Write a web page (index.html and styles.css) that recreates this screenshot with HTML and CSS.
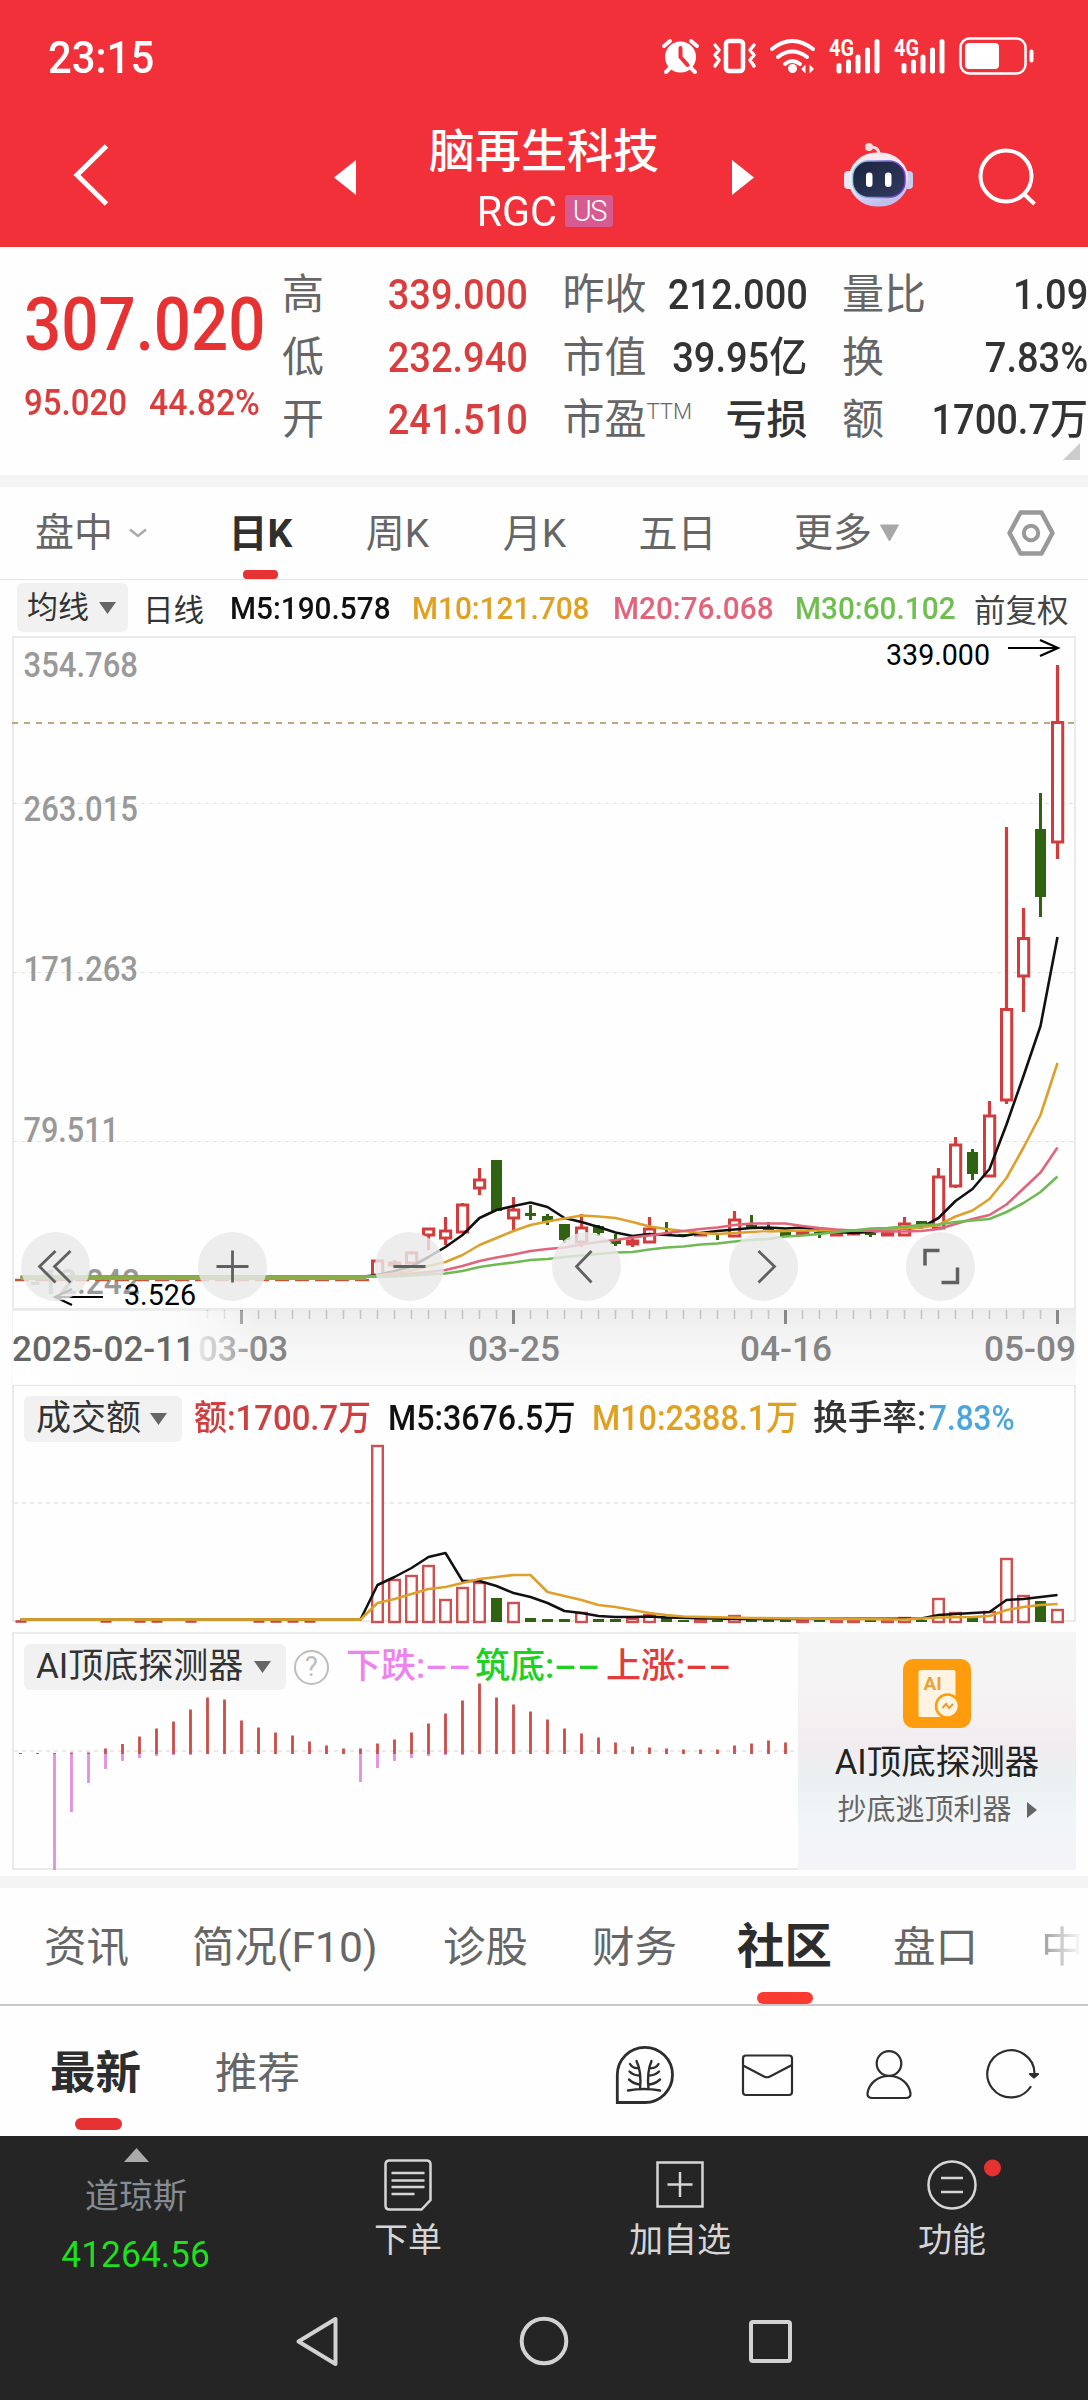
FILE: index.html
```html
<!DOCTYPE html>
<html lang="zh-CN">
<head>
<meta charset="utf-8">
<title>脑再生科技 RGC</title>
<link rel="stylesheet" href="styles.css">
</head>
<body>
<header class="top">
  <div class="status">
    <span class="clock">23:15</span>
    <svg class="status-icons" width="380" height="44" viewBox="660 34 380 44" fill="none" stroke="#fff">
      <circle cx="680.5" cy="57" r="15.5" fill="#fff" stroke="none"/>
      <path d="M664 46l6-5M697 46l-6-5M670 68l-4 4M691 68l4 4" stroke-width="4" stroke-linecap="round"/>
      <path d="M680.5 48v9l7 8" stroke="#f13039" stroke-width="4" stroke-linecap="round"/>
      <rect x="726" y="41" width="17" height="30" rx="3" stroke-width="4.5"/>
      <path d="M715 45l4 5-4 5 4 5-4 6M754 45l-4 5 4 5-4 5 4 6" stroke-width="3.5" stroke-linecap="round" stroke-linejoin="round"/>
      <path d="M772 49Q792 33 813 49M778 57Q792 46 807 57M785 64Q792 58 800 64" stroke-width="4" stroke-linecap="round"/>
      <circle cx="792.500" cy="68.500" r="4.500" fill="#fff" stroke="none"/>
      <path d="M801 69l4.500-4.500v9zM814 69l-4.500-4.500v9z" fill="#fff" stroke="none"/>
      <g stroke-width="5" stroke-linecap="round">
        <path id="sig" d="M839 65.500V71M848.500 62V71M858 57V71M867.500 50V71M877 41.500V71"/>
        <use href="#sig" x="65"/>
      </g>
      <g fill="#fff" stroke="none" class="net"><text x="829" y="56" textLength="25" lengthAdjust="spacingAndGlyphs">4G</text><text x="894" y="56" textLength="25" lengthAdjust="spacingAndGlyphs">4G</text></g>
      <rect x="960.500" y="38.500" width="65" height="35" rx="9" stroke-width="2.500"/>
      <rect x="965" y="43" width="34" height="26" rx="4" fill="#fff" stroke="none"/>
      <path d="M1031.500 51.500v9" stroke-width="4" stroke-linecap="round"/>
    </svg>
  </div>
  <nav class="titlebar">
    <svg class="back" width="36" height="66" viewBox="73 142 36 66" fill="none" stroke="#fff" stroke-width="5"><path d="M106.500 146L77 175l29.500 29"/></svg>
    <svg class="prev" width="22" height="35" viewBox="0 0 22 35"><path d="M22 0v35L0 17.500z" fill="#fff"/></svg>
    <div class="name"><h1>脑再生科技</h1><p><span class="code">RGC</span><span class="market">US</span></p></div>
    <svg class="next" width="22" height="35" viewBox="0 0 22 35"><path d="M0 0v35l22-17.500z" fill="#fff"/></svg>
    <svg class="robot" width="70" height="66" viewBox="844 142 70 66">
      <defs><linearGradient id="head" x1="0" y1="0" x2="0.300" y2="1"><stop offset="0" stop-color="#ffe9ea"/><stop offset=".6" stop-color="#f1e9f8"/><stop offset="1" stop-color="#bfc0ee"/></linearGradient>
      <linearGradient id="visor" x1="0" y1="0" x2="1" y2="1"><stop offset="0" stop-color="#1c2340"/><stop offset="1" stop-color="#313b5e"/></linearGradient>
      <linearGradient id="rim" x1="0" y1="0" x2="1" y2="0"><stop offset="0" stop-color="#8fd8ea"/><stop offset="1" stop-color="#7433d6"/></linearGradient></defs>
      <path d="M869 147q10-1 10 8" fill="none" stroke="#fbd9dc" stroke-width="3"/><circle cx="869" cy="147" r="4" fill="#fbd9dc"/>
      <rect x="844" y="171" width="9" height="18" rx="4" fill="#eee6f4"/><rect x="904" y="171" width="9" height="18" rx="4" fill="#c9cbf2"/>
      <rect x="848.500" y="152.500" width="60" height="54" rx="28" fill="url(#head)"/>
      <rect x="852.500" y="161" width="52.500" height="36.500" rx="16" fill="url(#visor)" stroke="url(#rim)" stroke-width="1.500"/>
      <rect x="866" y="172.500" width="6.500" height="14.500" rx="3.200" fill="#fff"/><rect x="885" y="172.500" width="6.500" height="14.500" rx="3.200" fill="#fff"/>
    </svg>
    <svg class="search" width="60" height="60" viewBox="977 147 60 60" fill="none" stroke="#fff" stroke-width="4"><circle cx="1006" cy="176" r="25.500"/><path d="M1024.500 194.500l10 9.500"/></svg>
  </nav>
</header>

<section class="quote">
  <div class="last"><div class="price">307.020</div><div class="change"><span>95.020</span><span>44.82%</span></div></div>
  <dl class="stats">
    <div><dt>高</dt><dd class="up">339.000</dd></div>
    <div><dt>昨收</dt><dd>212.000</dd></div>
    <div><dt>量比</dt><dd>1.09</dd></div>
    <div><dt>低</dt><dd class="up">232.940</dd></div>
    <div><dt>市值</dt><dd>39.95亿</dd></div>
    <div><dt>换</dt><dd>7.83%</dd></div>
    <div><dt>开</dt><dd class="up">241.510</dd></div>
    <div><dt>市盈<sup>TTM</sup></dt><dd class="cjk">亏损</dd></div>
    <div><dt>额</dt><dd>1700.7万</dd></div>
  </dl>
  <svg class="corner" width="17" height="17" viewBox="0 0 17 17"><path d="M17 0v17H0z" fill="#ccc"/></svg>
</section>

<nav class="periods">
  <span class="session">盘中<svg width="18" height="10" viewBox="0 0 18 10" fill="none" stroke="#aaa" stroke-width="2.500"><path d="M1 1.500l8 6.500 8-6.500"/></svg></span>
  <span class="on">日K</span><span>周K</span><span>月K</span><span class="five">五日</span>
  <span class="more">更多<svg width="21" height="18" viewBox="0 0 21 18"><path d="M1.500 1h18L10.500 17z" fill="#a8a8a8" stroke="#a8a8a8" stroke-linejoin="round"/></svg></span>
  <svg class="gear" width="48" height="46" viewBox="0 0 48 46" fill="none" stroke="#999" stroke-linejoin="round"><path d="M13.500 2.500h21L45.500 23l-11 20.500h-21L2.500 23z" stroke-width="4.500"/><circle cx="24" cy="23" r="7.200" stroke-width="4"/></svg>
</nav>

<div class="averages">
  <span class="pill small">均线<svg class="tri" width="17" height="12" viewBox="0 0 17 12"><path d="M0 0h17L8.500 12z"/></svg></span>
  <span class="kind">日线</span>
  <span class="ma m5">M5:190.578</span><span class="ma m10">M10:121.708</span><span class="ma m20">M20:76.068</span><span class="ma m30">M30:60.102</span>
  <span class="adj">前复权</span>
</div>
<svg id="kline" class="kline" width="1088" height="750" viewBox="0 634 1088 750"></svg>

<section class="panel volume">
  <div class="legend">
    <span class="pill">成交额<svg class="tri" width="17" height="12" viewBox="0 0 17 12"><path d="M0 0h17L8.500 12z"/></svg></span>
    <span class="v0">额:1700.7万</span><span class="v1">M5:3676.5万</span><span class="v2">M10:2388.1万</span><span class="v3">换手率:</span><span class="v4">7.83%</span>
  </div>
  <svg id="volume" width="1060" height="178" viewBox="14 1444 1060 178"></svg>
</section>

<section class="panel detector">
  <div class="left">
    <div class="legend">
      <span class="pill wide">AI顶底探测器<svg class="tri" width="17" height="12" viewBox="0 0 17 12"><path d="M0 0h17L8.500 12z"/></svg></span>
      <span class="help">?</span>
      <span class="s0">下跌:<i>--</i></span><span class="s1">筑底:<i>--</i></span><span class="s2">上涨:<i>--</i></span>
    </div>
    <svg id="detector" width="784" height="176" viewBox="14 1692 784 176"></svg>
  </div>
  <aside class="promo">
    <svg width="68" height="69" viewBox="0 0 68 69"><rect width="68" height="69" rx="10" fill="#ff9c0d"/><rect x="15.500" y="11" width="37" height="47" rx="2.500" fill="#fff3e2"/><text x="20.500" y="31" class="ai">AI</text><circle cx="44.500" cy="47" r="11.500" fill="#fff3e2" stroke="#ff9c0d" stroke-width="2.500"/><path d="M39.500 49l3.500-4 3 4 4-4" fill="none" stroke="#e89a2c" stroke-width="2"/></svg>
    <h2>AI顶底探测器</h2>
    <p>抄底逃顶利器<svg width="10" height="16" viewBox="0 0 10 16"><path d="M0 0l10 8-10 8z" fill="#666"/></svg></p>
  </aside>
</section>

<nav class="sections">
  <span class="a">资讯</span><span class="b">简况(F10)</span><span class="c">诊股</span><span class="d">财务</span><span class="e on">社区</span><span class="f">盘口</span><span class="g">中国</span>
</nav>
<nav class="feed">
  <span class="on">最新</span><span>推荐</span>
  <svg class="tools" width="430" height="64" viewBox="612 2042 430 64" fill="none" stroke="#2d2d2d" stroke-width="2.200" stroke-linecap="round" stroke-linejoin="round">
    <path d="M617.300 2102.500V2075a27.600 27.600 0 1 1 27.600 27.500z" stroke-width="2.800" stroke-linejoin="miter"/>
    <g stroke-width="2.400"><path d="M628 2090.500q16-3 32 0M640 2089c1-10 1-19-3.500-28M648.500 2089c-1-10-1-19 3-28M630 2064q3 5 9 4M629.500 2071.500q4 4 10 4M629 2079.500q5 4.500 11 5M658.500 2064q-3 5-9 4M659 2071.500q-4 4-10 4M660 2079.500q-5 4.500-11 5"/></g>
    <rect x="743" y="2055.500" width="49" height="39.500" rx="3"/><path d="M744 2066l20 10.500q3 1.500 6 0l21-11"/>
    <circle cx="889" cy="2063.500" r="12.300"/><path d="M889 2076c12 0 20 8 21.500 17q.5 5-5 5h-33q-5.500 0-5-5c1.500-9 9.500-17 21.500-17z"/>
    <path d="M1034.500 2073a23.600 23.600 0 1 0-4 14"/><path d="M1030 2074h8l-4 3.500z" fill="#2d2d2d"/>
  </svg>
</nav>

<footer class="dock">
  <div class="tabs">
    <div class="index"><svg width="25" height="14" viewBox="0 0 25 14"><path d="M12.500 0L25 14H0z" fill="#aaa"/></svg><span class="idx">道琼斯</span><span class="val">41264.56</span></div>
    <div><svg width="56" height="56" viewBox="0 0 56 56" fill="none" stroke="#d6d6d6" stroke-width="2.500"><path d="M9.500 2.500h37q4 0 4 4V42l-9 9.500h-32q-4 0-4-4v-41q0-4 4-4z"/><path d="M11.500 15h33M11.500 22.500h33M11.500 29h33M11.500 36h23"/></svg><span>下单</span></div>
    <div><svg width="56" height="56" viewBox="0 0 56 56" fill="none" stroke="#d6d6d6" stroke-width="2.500"><path d="M5.500 4.500h45v44h-45zM28 14v25M15.500 26.500h25"/></svg><span>加自选</span></div>
    <div><svg class="func" width="56" height="56" viewBox="0 0 56 56" fill="none" stroke="#d6d6d6" stroke-width="2.500"><circle cx="28" cy="27" r="23.500"/><path d="M17 20h22M17 34h22"/><circle cx="68.500" cy="10" r="8.500" fill="#e63232" stroke="none"/></svg><span>功能</span></div>
  </div>
  <div class="system">
    <svg width="52" height="52" viewBox="0 0 52 52" fill="none" stroke="#d2d2d2" stroke-width="4" stroke-linejoin="round"><path d="M43.500 4v45L6.500 26.500z"/></svg>
    <svg width="52" height="52" viewBox="0 0 52 52" fill="none" stroke="#d2d2d2" stroke-width="4"><circle cx="26" cy="26" r="22.300"/></svg>
    <svg width="52" height="52" viewBox="0 0 52 52" fill="none" stroke="#d2d2d2" stroke-width="4"><rect x="7" y="7" width="39" height="39" rx="2"/></svg>
  </div>
</footer>
<script src="charts.js"></script>
</body>
</html>
```
FILE: styles.css
```css
* { box-sizing: border-box; margin: 0; padding: 0; }
body { width: 1088px; height: 2400px; background: #fefefe; color: #333; font-family: "Roboto", "Noto Sans CJK SC", sans-serif; overflow: hidden; }
svg { display: block; flex: none; overflow: visible; }
span, dt, dd, h1, h2, p, .price { white-space: nowrap; }

.top { height: 247px; background: #f13039; color: #fff; }
.status { display: flex; justify-content: space-between; padding: 34px 48px 0; height: 112px; }
.clock { font-size: 45px; line-height: 48px; font-weight: 500; transform: scaleX(.93); transform-origin: left; }
.net { font-size: 23px; font-weight: 700; }
.titlebar { display: flex; height: 135px; }
.back { margin: 30px 0 0 73px; }
.prev { margin: 48px 0 0 225px; }
.name { width: 376px; padding-top: 11px; text-align: center; }
.name h1 { font-size: 46px; line-height: 56px; font-weight: 500; }
.name p { display: flex; justify-content: center; align-items: center; gap: 9px; height: 46px; margin-top: 9px; }
.code { font-size: 42px; transform: scaleX(.98); transform-origin: right; }
.market { width: 48px; height: 32px; border-radius: 3px; background: #d75b90; font-size: 29px; line-height: 32px; letter-spacing: -1.5px; font-weight: 300; }
.next { margin: 48px 0 0 0; }
.robot { margin: 30px 0 0 90px; }
.search { margin: 35px 0 0 63px; }

.quote { position: relative; display: flex; height: 240px; border-bottom: 12px solid #f4f4f4; }
.last { width: 282px; padding: 37px 0 0 24px; color: #e63232; }
.price { font-size: 75px; line-height: 80px; font-weight: 500; transform: scaleX(.873); transform-origin: left; }
.change { display: flex; gap: 25px; margin-top: 13px; color: #d93d3d; font-size: 37.500px; line-height: 50px; font-weight: 500; }
.change span { width: 100px; transform: scaleX(.88); transform-origin: left; }
.change span + span { transform: scaleX(.9); }
.stats { display: grid; grid-template-columns: 246px 245px 246px; grid-auto-rows: 62.500px; column-gap: 34.500px; padding-top: 17px; }
.stats div { display: flex; justify-content: space-between; line-height: 62px; font-size: 42px; }
.stats dt { color: #666; font-weight: 400; position: relative; }
.stats sup { font-size: 22px; line-height: 0; vertical-align: 15px; font-weight: 300; letter-spacing: 0; }
.stats dd { font-weight: 500; transform: scaleX(.905); transform-origin: right; color: #333; }
.stats dd.cjk { transform: none; font-size: 41px; }
.stats dd.up { color: #d93d3d; }
.corner { position: absolute; right: 8px; bottom: 15px; }

.periods { display: flex; height: 93px; border-bottom: 1.500px solid #e4e4e4; color: #666; font-size: 39px; line-height: 95px; }
.periods span { width: 137px; text-align: center; }
.periods .session { width: 192px; display: flex; align-items: center; gap: 16px; padding-left: 35px; }
.periods .on { color: #2f2f2f; font-weight: 700; display: flex; flex-direction: column; align-items: center; height: 92px; }
.periods .on::after { content: ""; display: block; width: 35px; height: 9px; border-radius: 4px; background: #e63232; margin-top: -12px; }
.periods .five { padding-left: 12px; }
.periods .more { width: 267px; display: flex; align-items: center; gap: 7px; padding-left: 54px; }
.gear { margin-top: 23px; }

.averages { display: flex; align-items: center; height: 54px; padding: 1px 0 0 17px; font-size: 32px; }
.pill { display: flex; align-items: center; justify-content: space-between; width: 158px; height: 46px; padding: 0 15px 0 12px; border-radius: 6px; background: #f1f1f1; color: #333; font-size: 35px; line-height: 46px; }
.pill.small { width: 111px; height: 49px; padding: 0 12px 0 10px; font-size: 31px; }
.tri path { fill: #666; }
.kind { width: 102px; padding-left: 15px; font-size: 30.500px; }
.ma { font-weight: 500; transform: scaleX(.93); transform-origin: left; flex: none; }
.m5 { width: 182px; margin-left: 0; color: #111; }
.m10 { width: 201px; color: #e0a020; }
.m20 { width: 182px; color: #e2647a; }
.m30 { width: 179px; color: #6fbe50; }
.adj { font-size: 31.500px; color: #444; }
.kline text { font-weight: 500; }

.panel { margin: 0 12px; border: 2px solid #eaeaea; width: 1064px; }
.legend { display: flex; align-items: center; height: 58px; padding: 8px 0 0 10px; font-size: 35px; line-height: 46px; }
.legend span:not(.pill):not(.help) { transform-origin: left; flex: none; font-weight: 500; }
.legend i { display: inline-block; font-style: normal; transform: scaleX(1.950); transform-origin: left; }
.volume { height: 238px; border-bottom: 0; margin-bottom: 10px; }
.v0 { width: 194px; margin-left: 12px; color: #cf3f3f; transform: scaleX(.94); }
.v1 { width: 204px; color: #111; transform: scaleX(.92); }
.v2 { width: 221px; color: #e0a020; transform: scaleX(.922); }
.legend .v3 { width: 116px; transform: scaleX(.99); font-weight: 400; }
.v4 { color: #4aa5dc; transform: scaleX(.9); }
.detector { height: 238px; display: flex; }
.left { width: 784px; }
.pill.wide { width: 262px; font-size: 35px; }
.help { width: 35px; height: 35px; margin: 0 17px 0 8px; border: 2.500px solid #bdbdbd; border-radius: 50%; color: #bdbdbd; font-size: 27px; line-height: 30px; text-align: center; }
.s0 { width: 129px; color: #ee82ee; }
.s1 { width: 131px; color: #1fd01f; }
.s2 { color: #e33b3b; }
.promo { width: 278px; height: 238px; margin: -2px -2px 0 0; display: flex; flex-direction: column; align-items: center; padding-top: 27px; background: linear-gradient(#f5f5f5, #f4f1f3 35%, #f1ecef 48%, #eaf0f1 62%, #f1f5f7 78%, #f5f4f8); }
.promo .ai { font-size: 19px; font-weight: 700; fill: #e8a23a; }
.promo h2 { font-size: 34.500px; line-height: 50px; font-weight: 400; color: #222; margin-top: 9px; }
.promo p { display: flex; align-items: center; gap: 15px; font-size: 29px; line-height: 46px; color: #666; }

.sections { display: flex; position: relative; height: 130px; margin-top: 6px; border-top: 12px solid #f4f4f4; border-bottom: 2px solid #c8c8c8; padding-left: 44px; font-size: 42.500px; line-height: 119px; color: #666; overflow: hidden; }
.sections span { flex: none; }
.a { width: 148px; } .b { width: 251px; } .c { width: 149px; } .d { width: 145px; } .f { width: 148px; }
.e { width: 156px; }
.sections .on { font-size: 47.500px; font-weight: 700; color: #2d2d2d; display: flex; flex-direction: column; }
.sections .on::after { content: ""; width: 56px; height: 12px; margin: -15px 0 0 20px; border-radius: 6px; background: #fb3a30; }
.g { background: linear-gradient(90deg, #999, #fff 42px); background-clip: text; -webkit-background-clip: text; color: transparent; }
.feed { display: flex; height: 130px; padding-left: 50px; font-size: 42.500px; line-height: 136px; color: #666; }
.feed span { width: 165px; height: 125px; }
.feed .on { font-size: 45.500px; font-weight: 700; color: #2d2d2d; display: flex; flex-direction: column; }
.feed .on::after { content: ""; width: 47px; height: 12px; margin: -24px 0 0 25px; border-radius: 6px; background: #e63232; }
.tools { margin: 36px 0 0 232px; }

.dock { height: 264px; background: #252525; color: #d6d6d6; }
.tabs { display: grid; grid-template-columns: repeat(4, 272px); height: 154px; font-size: 34px; }
.tabs div { display: flex; flex-direction: column; align-items: center; padding-top: 22px; line-height: 44px; }
.tabs div > span { margin-top: 4px; }
.tabs .index { padding-top: 12px; }
.tabs .idx { margin-top: 12px; color: #868c93; }
.tabs .val { margin-top: 15px; font-size: 36.500px; color: #1fe01f; transform: scaleX(.97); }
.system { display: flex; justify-content: center; padding-top: 25px; }
.system svg { margin: 0 87px; }
```
FILE: charts.js
```js
const RED = '#d33c3c', GREEN = '#2f6312';
const AXIS = '#999', GRID = '#e2e2e2';
const px = i => 20.5 + 17 * i;

const line = (x1, y1, x2, y2, stroke, w, extra = '') =>
  `<line x1="${x1}" y1="${y1}" x2="${x2}" y2="${y2}" stroke="${stroke}" stroke-width="${w}" ${extra}/>`;
const text = (x1, x2, y, size, str, fill, extra = '') =>
  `<text x="${x1}" y="${y}" font-size="${size}" fill="${fill}" textLength="${x2 - x1}" lengthAdjust="spacingAndGlyphs" ${extra}>${str}</text>`;
const curve = (pts, stroke, w) =>
  `<polyline points="${pts.map(([i, y]) => px(i) + ',' + y).join(' ')}" fill="none" stroke="${stroke}" stroke-width="${w}" stroke-linejoin="round"/>`;
// One y value per day, starting from day "first".
const run = (first, ys) => ys.map((y, k) => [first + k, y]);

// Candles: day, direction, high, body top, body bottom, low
const candles = [
  [21, 'r', 1260, 1261, 1275, 1275], [22, 'r', 1260, 1263, 1265, 1268], [23, 'r', 1251, 1253, 1263, 1264],
  [24, 'r', 1228, 1229, 1235, 1250], [25, 'r', 1217, 1231, 1238, 1245], [26, 'r', 1203, 1205, 1232, 1233],
  [27, 'r', 1168, 1180, 1188, 1195], [28, 'g', 1160, 1160, 1211, 1211], [29, 'r', 1197, 1210, 1218, 1230],
  [30, 'g', 1205, 1213, 1216, 1220], [31, 'g', 1214, 1216, 1222, 1225], [32, 'g', 1224, 1224, 1240, 1243],
  [33, 'r', 1214, 1228, 1242, 1247], [34, 'g', 1225, 1226, 1233, 1236], [35, 'g', 1234, 1240, 1244, 1246],
  [36, 'r', 1238, 1241, 1244, 1247], [37, 'r', 1217, 1229, 1242, 1243], [38, 'g', 1222, 1233, 1235, 1236],
  [39, 'g', 1234, 1234, 1236, 1236], [40, 'r', 1234, 1234, 1235, 1235], [41, 'g', 1233, 1233, 1235, 1240],
  [42, 'r', 1211, 1220, 1236, 1237], [43, 'g', 1215, 1225, 1228, 1228], [44, 'g', 1222, 1228, 1230, 1230],
  [45, 'g', 1231, 1231, 1236, 1237], [46, 'r', 1232, 1232, 1234, 1234], [47, 'g', 1231, 1232, 1234, 1238],
  [48, 'r', 1234, 1234, 1235, 1235], [49, 'r', 1232, 1233, 1234, 1234], [50, 'g', 1232, 1233, 1235, 1237],
  [51, 'r', 1232, 1233, 1235, 1235], [52, 'r', 1217, 1224, 1235, 1235], [53, 'g', 1221, 1221, 1225, 1225],
  [54, 'r', 1168, 1177, 1228, 1229], [55, 'r', 1137, 1145, 1186, 1188], [56, 'g', 1149, 1152, 1174, 1180],
  [57, 'r', 1101, 1116, 1176, 1177], [58, 'r', 827, 1009.500, 1100, 1104], [59, 'r', 908, 938.500, 976, 1012],
  [60, 'g', 793, 829, 897, 917], [61, 'r', 665, 722.500, 842, 859],
];

const ma5 = [[0, 1277], [20.2, 1276.5], [21, 1275], ...run(22, [1271, 1266.5, 1257, 1247, 1235, 1218, 1210, 1206, 1202.500,
  1207, 1218, 1222, 1227, 1232.500, 1236, 1234, 1235, 1236, 1233, 1231, 1229.500, 1228, 1227.500, 1228.500, 1227.500,
  1230.500, 1232, 1233, 1232, 1229.500, 1228.500, 1227.500, 1218, 1201, 1189, 1169, 1124.500, 1076, 1026, 937])];
const ma10 = [[0, 1277], [20.500, 1276.500], ...run(21, [1275.500, 1273.500, 1270.500, 1266, 1262, 1255, 1245, 1238, 1231, 1225, 1221.500,
  1218.500, 1215.500, 1216.500, 1218, 1222, 1226.500, 1229, 1231, 1233, 1234, 1233, 1232, 1231.500, 1231, 1230.500,
  1230.500, 1230.500, 1230.500, 1230, 1229.500, 1228.500, 1227.500, 1225, 1216.500, 1210.500, 1199, 1178, 1147.500, 1115, 1063])];
const ma20 = [[0, 1277], [21, 1276.500], ...run(22, [1275, 1273.500, 1272, 1270, 1266, 1261, 1257.500, 1254.500, 1251, 1249,
  1247.500, 1244.500, 1242, 1240, 1237.500, 1235.500, 1233, 1231, 1229, 1227.500, 1225, 1223.500, 1223.500, 1223.500, 1226,
  1228, 1229.500, 1230.500, 1231, 1231.500, 1231.500, 1231, 1229, 1224, 1219, 1215, 1204.500, 1188.500, 1172.500, 1147.500])];
const ma30 = [[0, 1277], [22, 1276.500], ...run(23, [1275.500, 1274.500, 1273.500, 1271, 1267, 1264.500, 1262.500, 1260, 1259,
  1257, 1255.500, 1254, 1252.500, 1252, 1249.500, 1247.500, 1246.500, 1244.500, 1243.500, 1241.500, 1240, 1239, 1236.500, 1235.500,
  1234, 1232, 1230.500, 1228.500, 1228, 1226.500, 1225, 1224.500, 1222, 1220.500, 1219, 1212, 1203, 1192, 1176.500])];

function drawKline() {
  let s = `<defs>
    <linearGradient id="band" x1="0" y1="0" x2="0" y2="1"><stop offset="0" stop-color="#ededed"/><stop offset=".5" stop-color="#f6f6f6"/><stop offset="1" stop-color="#fbfbfb"/></linearGradient>
    <linearGradient id="fade" gradientUnits="userSpaceOnUse" x1="14" y1="0" x2="260" y2="0"><stop offset="0" stop-color="#fff"/><stop offset=".7" stop-color="#fbfbfb"/><stop offset="1" stop-color="#fbfbfb" stop-opacity="0"/></linearGradient>
  </defs>
  <rect x="12" y="1309" width="1064" height="76" fill="url(#band)"/>
  <rect x="13" y="637" width="1062" height="672" fill="#fefefe" stroke="#eaeaea" stroke-width="2"/>`;
  for (const y of [803.500, 972.500, 1141.500]) s += line(13, y, 1074, y, GRID, 1.200, 'stroke-dasharray="4 4"');
  s += line(12, 723, 1074, 723, '#c2a97c', 1.800, 'stroke-dasharray="6 6"');
  s += text(23.500, 138, 677, 35, '354.768', AXIS) + text(23.500, 138, 821, 35, '263.015', AXIS) + text(23.500, 138, 981, 35, '171.263', AXIS)
    + text(23.500, 119, 1142, 35, '79.511', AXIS) + text(30, 140, 1294, 35, '-12.242', AXIS);
  s += text(886, 990, 665, 29.500, '339.000', '#000', 'style="font-weight:400"') + text(124, 196, 1305, 29.500, '3.526', '#000', 'style="font-weight:400"');
  s += '<path d="M1008 648h50M1040 640l18 8-18 8M103 1297H55M72 1289l-17 8 17 8" fill="none" stroke="#000" stroke-width="2.200"/>';

  s += line(15, 1280, 372, 1280, '#c8553a', 2.500, 'stroke-dasharray="14 6"');
  for (const [i, c, hi, top, bot, lo] of candles) {
    const x = px(i);
    if (c === 'g') s += line(x, hi, x, lo, GREEN, 3) + `<rect x="${x - 5.500}" y="${top}" width="11" height="${bot - top}" fill="${GREEN}"/>`;
    else s += line(x, hi, x, top, RED, 3.200) + line(x, bot, x, lo, RED, 3.200)
      + `<rect x="${x - 5}" y="${top}" width="10.200" height="${bot - top}" fill="#fff" stroke="${RED}" stroke-width="3"/>`;
  }
  s += curve(ma5, '#111', 2.600) + curve(ma10, '#dda02b', 2.600) + curve(ma20, '#e2647a', 2.600) + curve(ma30, '#70ba55', 2.600);
  s += line(21, 1278, 366, 1278, '#8aad4a', 4);

  for (let i = 11; i < 62; i++) {
    const big = (i - 13) % 16 === 0;
    s += line(px(i), 1310, px(i), big ? 1324 : 1319, big ? '#888' : '#c2c2c2', big ? 3 : 1.500);
  }
  s += text(198, 288, 1361, 34.500, '03-03', '#858585') + '<rect x="13" y="1311" width="247" height="73" fill="url(#fade)"/>'
    + text(12, 195, 1361, 34.500, '2025-02-11', '#666') + text(468, 560, 1361, 34.500, '03-25', '#858585')
    + text(740, 832, 1361, 34.500, '04-16', '#858585') + text(984, 1076, 1361, 34.500, '05-09', '#858585');

  const glyphs = ['M0-15.500L-16 0 0 16M15-15.500L-1 0l16 16', 'M-16 0h32M0-16v32', 'M-16 0h32', 'M5-15.500L-10 0 5 16', 'M-5-15.500L11 0-5 16', 'M-15.500-1v-15h14.500M1 16h16v-15'];
  glyphs.forEach((d, k) => {
    const cx = 55.500 + 177 * k;
    s += `<circle cx="${cx}" cy="1266.500" r="34.500" fill="#e9e9e9" fill-opacity=".82"/><path transform="translate(${cx} 1266.500)" d="${d}" fill="none" stroke="#606060" stroke-width="${k === 5 ? 3.500 : 2.800}"/>`;
  });
  document.getElementById('kline').innerHTML = s;
}

// Turnover bars: direction and bar top, from day 21 on
const turnover = 'r1446 r1580 r1576 r1566 r1600 r1588 r1583 g1598 r1603 g1618 g1619 g1619 r1613 g1619 g1619 r1619 r1615 g1617 g1620 r1620 g1620 r1616 g1618 g1620 g1620 r1620 g1620 r1620 r1620 g1620 r1620 r1618 g1620 r1599 r1613 g1616 r1612 r1559 r1596 g1601 r1610'.split(' ');

function drawVolume() {
  let s = line(14, 1503, 1074, 1503, GRID, 1.500, 'stroke-dasharray="4 4"') + line(12, 1621, 1076, 1621, '#eaeaea', 2);
  for (const [i, n] of [[0, 1], [5, 1], [7, 2], [10, 1], [14, 4]]) for (let k = 0; k < n; k++) s += line(px(i + k) - 5, 1621.500, px(i + k) + 6, 1621.500, RED, 2.500);
  turnover.forEach((b, k) => {
    const x = px(21 + k), y = +b.slice(1);
    s += b[0] === 'g' ? `<rect x="${x - 5.500}" y="${y}" width="11" height="${1622 - y}" fill="${GREEN}"/>`
      : `<rect x="${x - 5.300}" y="${y}" width="10.600" height="${1622 - y}" fill="#fff" stroke="#cf5050" stroke-width="2.400"/>`;
  });
  s += curve([[0, 1619.5], [20, 1619.500], ...run(21, [1585, 1577, 1568, 1557, 1553, 1581, 1581, 1586, 1593, 1597, 1603, 1611, 1613, 1616, 1617, 1617, 1616.500, 1617.500]),
    [42, 1619], [53, 1618.500], [54, 1615], [57, 1612], [58, 1600], [59, 1599], [61, 1595]], '#111', 2.500);
  s += curve([[0, 1619.500], [20, 1619.500], ...run(21, [1603, 1599, 1594, 1589, 1587, 1583, 1579, 1577, 1575, 1575, 1592, 1596, 1600, 1605, 1607, 1610, 1613, 1615, 1616.500]),
    [43, 1618], [52, 1619.500], [54, 1617.500], [56, 1617], [57, 1616], [58, 1610], [59, 1607], [60, 1605], [61, 1604]], '#dda02b', 2.600);
  s += line(21, 1619.500, 360, 1619.500, '#cc9a30', 3.200);
  document.getElementById('volume').innerHTML = s;
}

// Detector: height above and depth below the zero line for each day
const above = [1, 1, 1, 1.500, 1.500, 5.500, 10, 17.500, 25.500, 32.500, 44.500, 56.500, 54.500, 33.500, 26.500, 21.500, 18.500, 12.500, 8.500, 5.500, 5.500, 10.500, 14.500,
  21.500, 30.500, 40.500, 53.500, 70.500, 56.500, 49.500, 42.500, 34.500, 25.500, 20.500, 16.500, 11.500, 7.500, 6.500, 5.500, 4.500, 4.500, 4.500, 8.500, 10.500, 13.500, 11.500];
const below = { 2: 116, 3: 58, 4: 29, 5: 15, 6: 7, 7: 4, 8: 2, 9: 1, 10: 1, 20: 28, 21: 14, 22: 7, 23: 4, 24: 2, 25: 1, 26: 1 };

function drawDetector() {
  let s = line(14, 1751, 798, 1751, GRID, 1.500, 'stroke-dasharray="4 4"');
  above.forEach((h, i) => {
    s += line(px(i), 1754 - h, px(i), 1754, '#cb4c49', 2.800);
    if (below[i]) s += line(px(i), 1754, px(i), 1754 + below[i], '#e28fe6', 2.800);
  });
  document.getElementById('detector').innerHTML = s;
}

drawKline();
drawVolume();
drawDetector();
```
